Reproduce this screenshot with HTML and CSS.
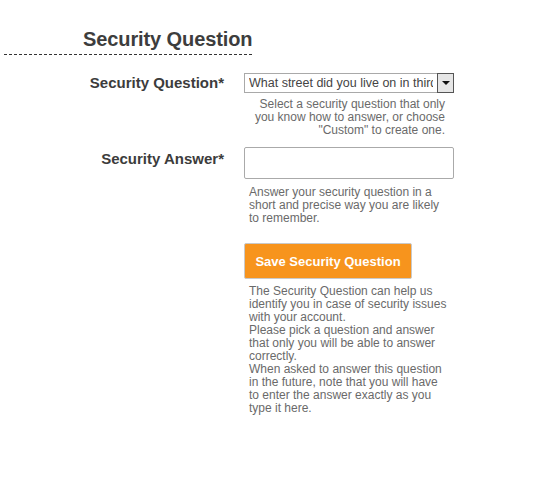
FILE: index.html
```html
<!DOCTYPE html>
<html lang="en">
<head>
  <meta charset="UTF-8" />
  <title>Security Question</title>
  <link rel="stylesheet" href="styles.css">
</head>
<body>
  <div class="section">
    <h2 class="section-title">Security Question</h2>

    <div class="form-row">
      <label class="form-label" for="question">Security Question*</label>
      <div class="form-field">
        <div class="select-box">
          <select id="question">
            <option>What street did you live on in third grade?</option>
            <option>Custom</option>
          </select>
          <span class="select-arrow"></span>
        </div>
        <p class="help help-right">Select a security question that only you know how to answer, or choose "Custom" to create one.</p>
      </div>
    </div>

    <div class="form-row">
      <label class="form-label form-label-answer" for="answer">Security Answer*</label>
      <div class="form-field">
        <input type="text" id="answer" class="text-input">
        <p class="help help-answer">Answer your security question in a short and precise way you are likely to remember.</p>
      </div>
    </div>

    <div class="form-row">
      <div class="form-label"></div>
      <div class="form-field">
        <button class="save-btn">Save Security Question</button>
        <p class="help help-info">The Security Question can help us identify you in case of security issues with your account.<br>Please pick a question and answer that only you will be able to answer correctly.<br>When asked to answer this question in the future, note that you will have to enter the answer exactly as you type it here.</p>
      </div>
    </div>
  </div>
</body>
</html>
```

FILE: styles.css
```css
body {
  margin: 0;
  font-family: "Liberation Sans", Arial, sans-serif;
  background: #fff;
  color: #3c3c3c;
}

.section {
  padding-top: 27px;
}

.section-title {
  margin: 0 0 0 4px;
  width: 169px;
  padding: 0 0 3px 79px;
  font-size: 20px;
  line-height: 24px;
  font-weight: bold;
  white-space: nowrap;
  letter-spacing: -0.1px;
  color: #3d3d3d;
  border-bottom: 1px dashed #333;
}

.form-row {
  display: flex;
  gap: 20px;
}

.form-row:first-of-type {
  margin-top: 18px;
}

.form-label {
  width: 224px;
  flex-shrink: 0;
  text-align: right;
  font-size: 15px;
  font-weight: bold;
  line-height: 20px;
  color: #3c3c3c;
}

.form-label-answer {
  padding-top: 12px;
}

.form-field {
  width: 210px;
}

.select-box {
  position: relative;
  width: 210px;
  height: 20px;
}

.select-box select {
  appearance: none;
  -webkit-appearance: none;
  width: 100%;
  height: 20px;
  margin: 0;
  padding: 0 20px 0 4px;
  border: 1px solid #a9a9a9;
  border-radius: 0;
  background: #fff;
  font-family: inherit;
  font-size: 12.5px;
  color: #444;
}

.select-arrow {
  position: absolute;
  right: 0;
  top: 0;
  width: 15px;
  height: 18px;
  border: 1px solid #555;
  background: #e6e6e6;
}

.select-arrow::after {
  content: "";
  position: absolute;
  left: 4px;
  top: 7px;
  border-left: 4px solid transparent;
  border-right: 4px solid transparent;
  border-top: 4px solid #111;
}

.text-input {
  display: block;
  box-sizing: border-box;
  width: 210px;
  height: 32px;
  margin: 10px 0 0;
  border: 1px solid #aaa;
  border-radius: 2px;
  background: #fff;
}

.help {
  margin: 5px 0 0;
  padding: 0 5px;
  font-size: 12px;
  line-height: 13px;
  color: #6a6a6a;
}

.help-right {
  text-align: right;
  padding-right: 9px;
}

.help-answer {
  margin-top: 7px;
}

.save-btn {
  display: block;
  margin-top: 18px;
  width: 168px;
  height: 36px;
  border: 1px solid #c9c9c9;
  border-radius: 2px;
  background-color: #f7941d;
  color: #fff;
  font-family: inherit;
  font-size: 13px;
  font-weight: bold;
  cursor: pointer;
}

.help-info {
  margin-top: 6px;
}
```
